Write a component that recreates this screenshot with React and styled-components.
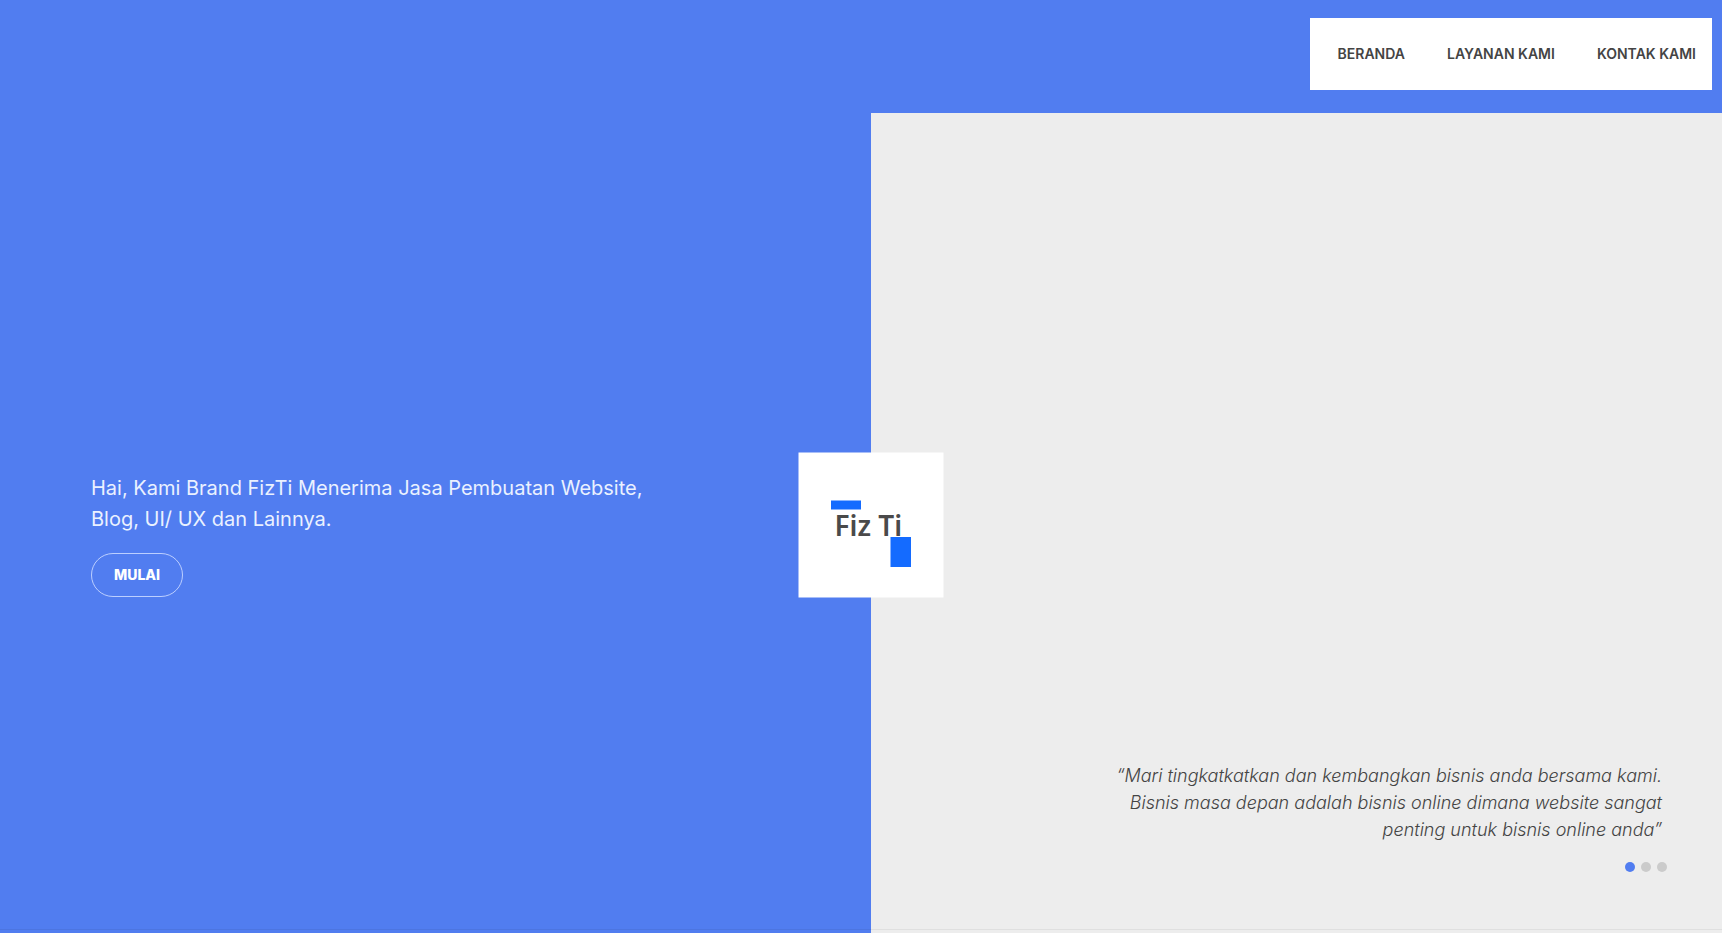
import React from "react";
import styled, { createGlobalStyle } from "styled-components";

const blue = "#517df0";
const ink = "#444444";

const GlobalStyle = createGlobalStyle`
  *, *::before, *::after { box-sizing: border-box; }
  body {
    margin: 0;
    background: ${blue};
    font-family: Inter, "Open Sans", sans-serif;
    color: ${ink};
  }
`;

const Page = styled.div`
  display: flex;
  flex-direction: column;
  min-height: 100vh;
`;

const Header = styled.header`
  display: flex;
  justify-content: flex-end;
  padding: 18px 10px 23px;
`;

const Nav = styled.nav`
  display: flex;
  align-items: center;
  gap: 42px;
  height: 72px;
  padding: 0 16px 0 28px;
  background: #ffffff;
`;

const NavLink = styled.a`
  font-size: 14px;
  line-height: 20px;
  font-weight: 600;
  color: ${ink};
  text-decoration: none;
  white-space: nowrap;
`;

const Hero = styled.main`
  position: relative;
  flex: 1;
  display: grid;
  grid-template-columns: calc(50% + 10px) 1fr;
`;

const Intro = styled.section`
  display: flex;
  flex-direction: column;
  justify-content: center;
  align-items: flex-start;
  gap: 18px;
  padding: 24px 91px 0;
`;

const Lead = styled.p`
  margin: 0;
  font-size: 20px;
  line-height: 31px;
  color: #eaf1ff;
`;

const StartButton = styled.button`
  height: 44px;
  padding: 0 22px;
  border: 1px solid #bccfff;
  border-radius: 22px;
  background: transparent;
  font-family: inherit;
  font-size: 14px;
  line-height: 20px;
  font-weight: 800;
  color: #ffffff;
  cursor: pointer;
`;

const Showcase = styled.section`
  display: flex;
  flex-direction: column;
  justify-content: flex-end;
  align-items: flex-end;
  gap: 19px;
  padding: 0 55px 61px;
  background: #ededed;
`;

const Quote = styled.blockquote`
  margin: 0;
  padding-right: 5px;
  font-size: 18px;
  line-height: 27px;
  font-style: italic;
  font-weight: 300;
  text-align: right;
`;

const Dots = styled.div`
  display: flex;
  gap: 6px;
`;

const Dot = styled.button`
  width: 10px;
  height: 10px;
  padding: 0;
  border: 0;
  border-radius: 50%;
  background: ${({ $active }) => ($active ? blue : "#cbcbcb")};
  cursor: pointer;
`;

const LogoTile = styled.div`
  position: absolute;
  top: calc(50% + 2px);
  left: calc(50% + 10px);
  width: 145px;
  height: 145px;
  transform: translate(-50%, -50%);
  background: #ffffff;
`;

const BottomRule = styled.div`
  position: absolute;
  right: 0;
  bottom: 3px;
  left: 0;
  height: 1px;
  background: rgba(0, 0, 0, 0.06);
`;

const links = ["BERANDA", "LAYANAN KAMI", "KONTAK KAMI"];

function Logo() {
  return (
    <svg width="145" height="145" viewBox="0 0 145 145" role="img" aria-label="Fiz Ti">
      <rect x="32.5" y="48" width="30" height="9" fill="#146bff" />
      <text
        x="36"
        y="83"
        fontFamily="'Noto Sans', sans-serif"
        fontSize="28"
        fontWeight="600"
        fill="#4a4a4a"
      >
        Fiz Ti
      </text>
      <rect x="92" y="84.5" width="20.5" height="30" fill="#146bff" />
    </svg>
  );
}

export default function App() {
  const [slide, setSlide] = React.useState(0);
  return (
    <>
      <GlobalStyle />
      <Page>
        <Header>
          <Nav>
            {links.map((label) => (
              <NavLink href="#" key={label}>{label}</NavLink>
            ))}
          </Nav>
        </Header>
        <Hero>
          <Intro>
            <Lead>
              Hai, Kami Brand FizTi Menerima Jasa Pembuatan Website,
              <br />
              Blog, UI/ UX dan Lainnya.
            </Lead>
            <StartButton type="button">MULAI</StartButton>
          </Intro>
          <Showcase>
            <Quote>
              “Mari tingkatkatkan dan kembangkan bisnis anda bersama kami.
              <br />
              Bisnis masa depan adalah bisnis online dimana website sangat
              <br />
              penting untuk bisnis online anda”
            </Quote>
            <Dots>
              {[0, 1, 2].map((i) => (
                <Dot
                  key={i}
                  type="button"
                  aria-label={`Slide ${i + 1}`}
                  $active={i === slide}
                  onClick={() => setSlide(i)}
                />
              ))}
            </Dots>
          </Showcase>
          <LogoTile>
            <Logo />
          </LogoTile>
          <BottomRule />
        </Hero>
      </Page>
    </>
  );
}
